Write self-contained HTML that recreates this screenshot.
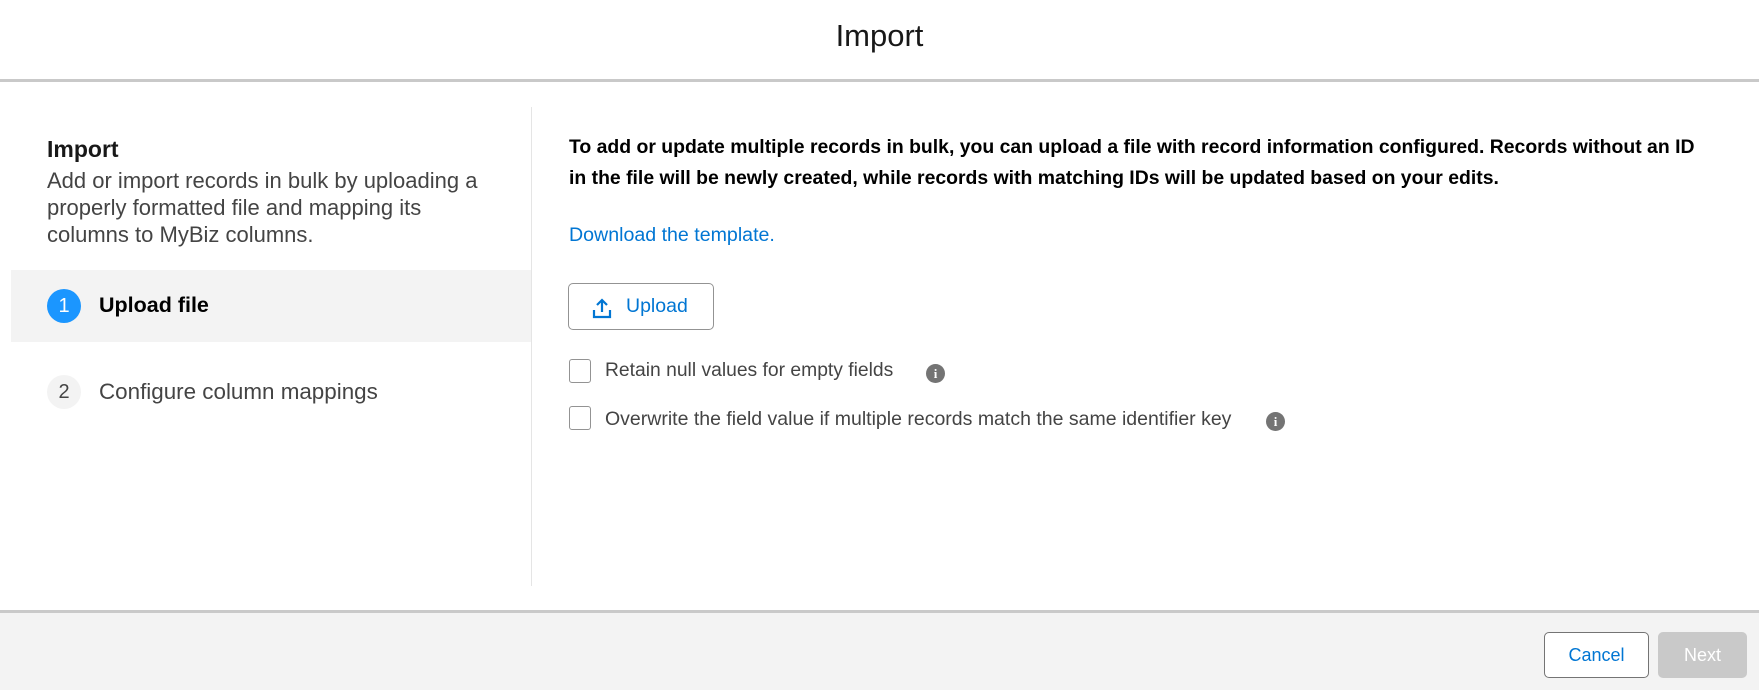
<!DOCTYPE html>
<html><head><meta charset="utf-8"><style>
*{margin:0;padding:0;box-sizing:border-box}
body{width:1759px;height:690px;position:relative;background:#fff;font-family:"Liberation Sans",sans-serif;color:#181818;overflow:hidden}
.a{position:absolute;white-space:nowrap}
</style></head><body>
<div class="a" style="left:0;width:1759px;text-align:center;top:18px;font-size:31px;color:#181818">Import</div>
<div class="a" style="left:0;top:79px;width:1759px;height:3px;background:#c9c9c9"></div>
<div class="a" style="left:531px;top:107px;width:1px;height:479px;background:#e5e5e5"></div>
<div class="a" style="left:47px;top:136px;font-size:23px;font-weight:bold">Import</div>
<div class="a" style="left:47px;top:167px;font-size:22px;line-height:27px;color:#444">Add or import records in bulk by uploading a<br>properly formatted file and mapping its<br>columns to MyBiz columns.</div>
<div class="a" style="left:11px;top:270px;width:520px;height:72px;background:#f3f3f3"></div>
<div class="a" style="left:47px;top:289px;width:34px;height:34px;border-radius:50%;background:#1b96ff;color:#fff;font-size:20px;text-align:center;line-height:34px">1</div>
<div class="a" style="left:99px;top:293px;font-size:21.5px;font-weight:bold;color:#000">Upload file</div>
<div class="a" style="left:47px;top:375px;width:34px;height:34px;border-radius:50%;background:#f3f3f3;color:#444;font-size:20px;text-align:center;line-height:34px">2</div>
<div class="a" style="left:99px;top:379px;font-size:22.4px;color:#444">Configure column mappings</div>
<div class="a" style="left:569px;top:132px;font-size:19.4px;font-weight:bold;line-height:31px;color:#000">To add or update multiple records in bulk, you can upload a file with record information configured. Records without an ID<br>in the file will be newly created, while records with matching IDs will be updated based on your edits.</div>
<div class="a" style="left:569px;top:224px;font-size:19.6px;color:#0176d3">Download the template.</div>
<div class="a" style="left:568px;top:283px;width:146px;height:47px;border:1px solid #939393;border-radius:5px"></div>
<svg class="a" style="left:592px;top:297px" width="20" height="22" viewBox="0 0 20 22"><path d="M10 15V3M5 8l5-5 5 5M2 13v7h16v-7" fill="none" stroke="#0176d3" stroke-width="2.2"/></svg>
<div class="a" style="left:626px;top:295px;font-size:19.5px;color:#0176d3">Upload</div>
<div class="a" style="left:569px;top:359px;width:22px;height:24px;border:1px solid #939393;border-radius:3px"></div>
<div class="a" style="left:605px;top:360px;font-size:19.3px;color:#444">Retain null values for empty fields</div>
<div class="a" style="left:926px;top:364px;width:19px;height:19px;border-radius:50%;background:#747474;color:#fff;font-size:13px;font-weight:bold;text-align:center;line-height:19px;font-family:'Liberation Serif',serif">i</div>
<div class="a" style="left:569px;top:406px;width:22px;height:24px;border:1px solid #939393;border-radius:3px"></div>
<div class="a" style="left:605px;top:408px;font-size:19.5px;color:#444">Overwrite the field value if multiple records match the same identifier key</div>
<div class="a" style="left:1266px;top:412px;width:19px;height:19px;border-radius:50%;background:#747474;color:#fff;font-size:13px;font-weight:bold;text-align:center;line-height:19px;font-family:'Liberation Serif',serif">i</div>
<div class="a" style="left:0;top:610px;width:1759px;height:3px;background:#c9c9c9"></div>
<div class="a" style="left:0;top:613px;width:1759px;height:77px;background:#f3f3f3"></div>
<div class="a" style="left:1544px;top:632px;width:105px;height:46px;border:1px solid #747474;border-radius:5px;background:#fff;color:#0176d3;font-size:18px;text-align:center;line-height:44px">Cancel</div>
<div class="a" style="left:1658px;top:632px;width:89px;height:46px;border-radius:5px;background:#c9c9c9;color:#fff;font-size:18px;text-align:center;line-height:46px">Next</div>
</body></html>
